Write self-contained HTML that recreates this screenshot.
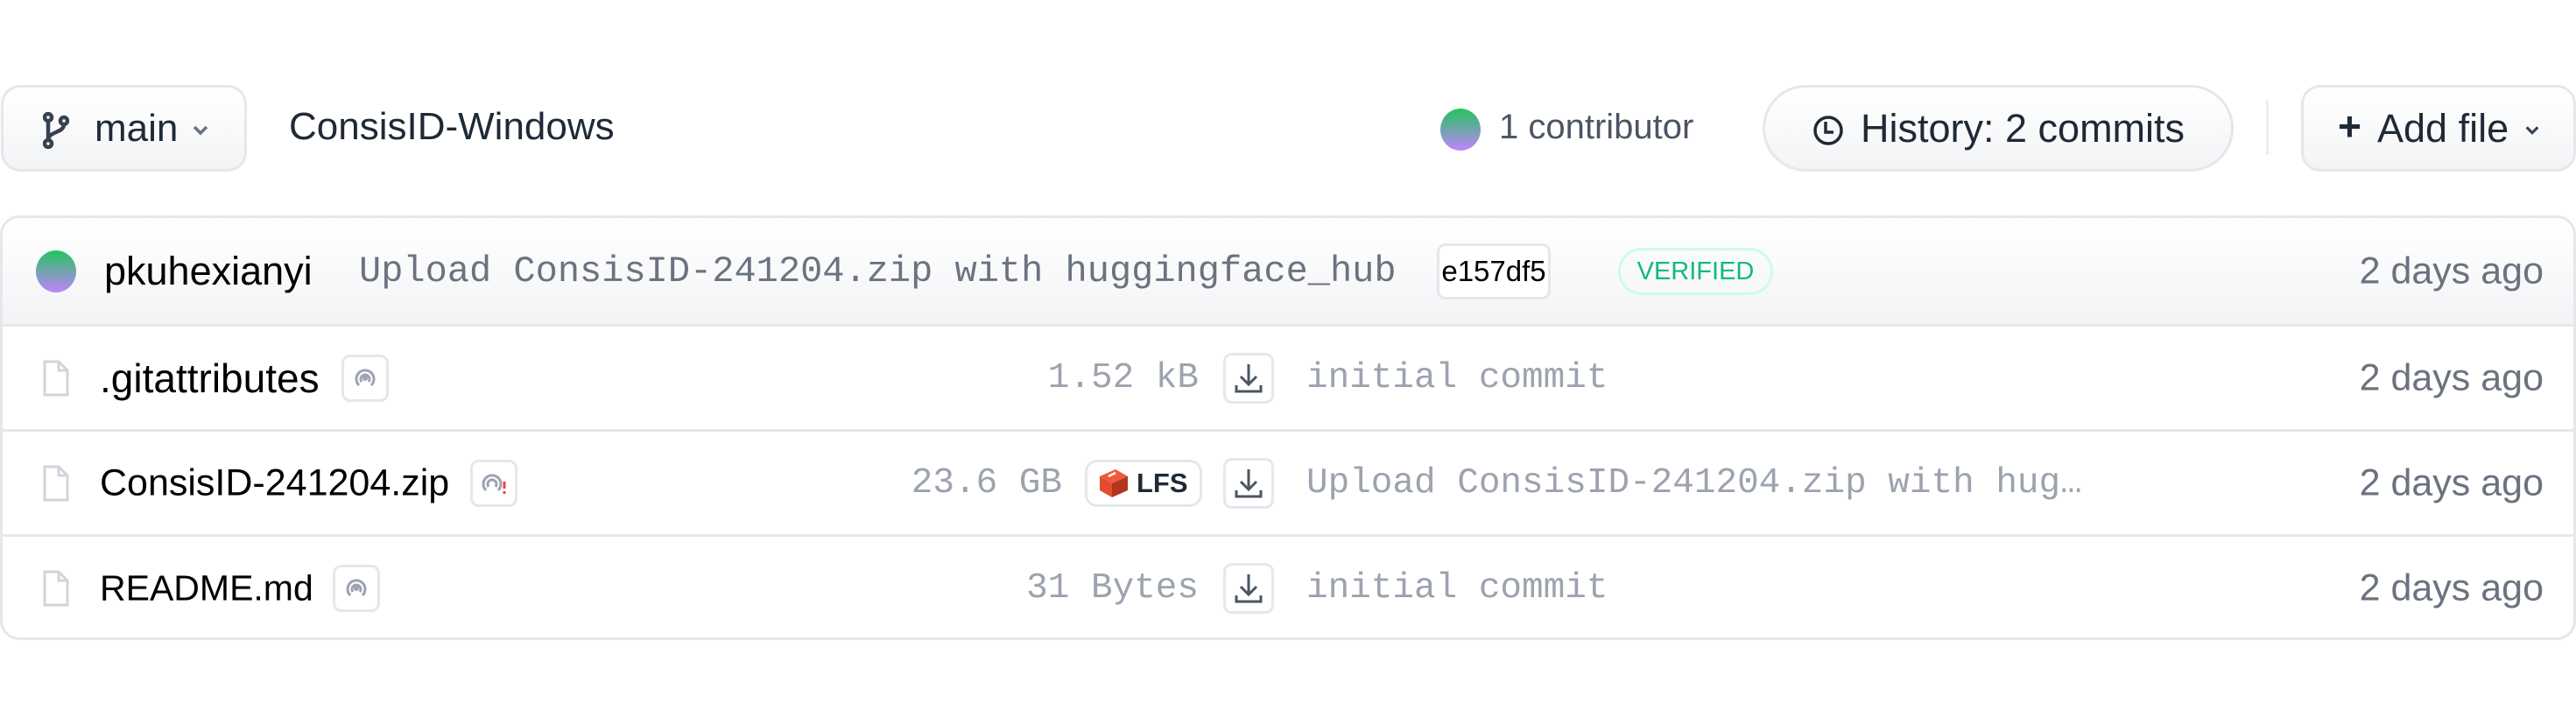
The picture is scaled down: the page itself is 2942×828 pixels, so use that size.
<!DOCTYPE html>
<html><head><meta charset="utf-8"><style>
*{box-sizing:border-box;margin:0;padding:0}
body{width:2942px;height:828px;background:#fff;position:relative;overflow:hidden;font-family:"Liberation Sans",sans-serif;color:#111827}
.a{position:absolute}
.btn{position:absolute;border:3px solid #e5e7eb;background:linear-gradient(#fff,#f3f4f6);display:flex;align-items:center}
.sans{font-size:43px;white-space:nowrap}
.mono{font-family:"Liberation Mono",monospace;font-size:41px;white-space:nowrap}
.row{position:absolute;left:0;width:2940px;height:120px;border-top:3px solid #e5e7eb}
.c{position:absolute;top:50%;transform:translateY(-50%)}
.av{border-radius:50%;background:linear-gradient(#22c55e,#c084fc)}
.badge{position:absolute;border:3px solid #e5e7eb;border-radius:10px;width:54px;height:54px;display:flex;align-items:center;justify-content:center;top:50%;transform:translateY(-50%)}
.dl{position:absolute;left:1394px;width:58px;height:58px;border:3px solid #e5e7eb;border-radius:10px;top:50%;transform:translateY(-50%);display:flex;align-items:center;justify-content:center}
</style></head><body>

<div class="btn" style="left:1px;top:97px;width:281px;height:99px;border-radius:22px">
 <svg class="a" style="left:45px;top:28px" width="30" height="42" viewBox="0 0 30 42" fill="none" stroke="#374151" stroke-width="4.5"><circle cx="6" cy="6" r="4"/><circle cx="6" cy="36" r="4"/><circle cx="24" cy="10" r="4"/><path d="M6 10v22M24 14c0 10-18 8-18 18"/></svg>
 <span class="a sans" style="left:104px;top:22px;color:#1f2937;font-size:44px">main</span>
 <svg class="a" style="left:215px;top:42px" width="20" height="14" viewBox="0 0 20 14"><path d="M3 3l7 7 7-7" fill="none" stroke="#6b7280" stroke-width="3.5"/></svg>
</div>
<span class="a sans" style="left:330px;top:120px;color:#1f2937;font-size:44px">ConsisID-Windows</span>

<div class="a av" style="left:1645px;top:124px;width:46px;height:48px"></div>
<span class="a sans" style="left:1712px;top:123px;color:#4b5563;font-size:40px">1 contributor</span>

<div class="btn" style="left:2013px;top:97px;width:538px;height:99px;border-radius:50px">
 <svg class="a" style="left:53px;top:30px" width="38" height="38" viewBox="0 0 38 38" fill="none" stroke="#1f2937" stroke-width="3.5"><circle cx="19" cy="19" r="15"/><path d="M16 9v12h9"/></svg>
 <span class="a sans" style="left:109px;top:21px;color:#1f2937;font-size:45px">History: 2 commits</span>
</div>
<div class="a" style="left:2588px;top:115px;width:3px;height:62px;background:#eceef1"></div>
<div class="btn" style="left:2628px;top:97px;width:314px;height:99px;border-radius:22px">
 <span class="a" style="left:39px;top:17px;font-size:46px;color:#1f2937;font-weight:bold">+</span>
 <span class="a sans" style="left:84px;top:21px;color:#1f2937;font-size:45px">Add file</span>
 <svg class="a" style="left:252px;top:42px" width="18" height="14" viewBox="0 0 20 14"><path d="M3 3l7 7 7-7" fill="none" stroke="#374151" stroke-width="3.5"/></svg>
</div>

<div class="a" style="left:0;top:246px;width:2942px;height:485px;border:3px solid #e5e7eb;border-radius:22px;overflow:hidden">
 <div class="a" style="left:0;top:0;width:2940px;height:122px;background:linear-gradient(#fff,#f3f4f6)">
  <div class="c av" style="left:38px;width:46px;height:48px"></div>
  <span class="c sans" style="left:116px;color:#000;font-size:45px">pkuhexianyi</span>
  <span class="c mono" style="left:407px;color:#6b7280;font-size:42px">Upload ConsisID-241204.zip with huggingface_hub</span>
  <div class="c" style="left:1638px;width:130px;height:64px;border:3px solid #e5e7eb;border-radius:10px;background:#fff;display:flex;align-items:center;justify-content:center"><span style="font-size:33px;color:#000">e157df5</span></div>
  <div class="c" style="left:1845px;width:177px;height:54px;border:3px solid #d1fae5;border-radius:28px;display:flex;align-items:center;justify-content:center"><span style="font-size:29px;color:#10b981">VERIFIED</span></div>
  <span class="c sans" style="right:38px;color:#6b7280">2 days ago</span>
 </div>

 <div class="row" style="top:121px">
  <svg class="c" style="left:46px" width="30" height="42" viewBox="0 0 30 42" fill="none" stroke="#d1d5db" stroke-width="3"><path d="M2 2h16l10 10v28H2zM18 2v10h10"/></svg>
  <span class="c sans" style="left:111px;color:#000;font-size:46px">.gitattributes</span>
  <div class="badge" style="left:387px"><svg width="28" height="28" viewBox="0 0 28 28" fill="none" stroke="#9ca3af" stroke-width="3"><path d="M7 22a10 10 0 1 1 14 0M10 18a5 5 0 1 1 8 0"/><circle cx="14" cy="14" r="1.5" fill="#9ca3af"/></svg></div>
  <span class="c mono" style="right:1574px;color:#9ca3af">1.52 kB</span>
  <div class="dl"><svg width="34" height="36" viewBox="0 0 34 36" fill="none" stroke="#4b5563" stroke-width="3"><path d="M17 2v22M8 16l9 9 9-9M3 26v7h28v-7"/></svg></div>
  <span class="c mono" style="left:1489px;color:#9ca3af">initial commit</span>
  <span class="c sans" style="right:38px;color:#6b7280">2 days ago</span>
 </div>

 <div class="row" style="top:241px">
  <svg class="c" style="left:46px" width="30" height="42" viewBox="0 0 30 42" fill="none" stroke="#d1d5db" stroke-width="3"><path d="M2 2h16l10 10v28H2zM18 2v10h10"/></svg>
  <span class="c sans" style="left:111px;color:#000;font-size:43px">ConsisID-241204.zip</span>
  <div class="badge" style="left:534px"><svg width="32" height="28" viewBox="0 0 32 28" fill="none" stroke="#9ca3af" stroke-width="3"><path d="M7 22a10 10 0 1 1 14 0M10 18a5 5 0 1 1 8 0"/><path d="M28 12v8M28 23v3" stroke="#ef4444"/></svg></div>
  <span class="c mono" style="right:1730px;color:#9ca3af">23.6 GB</span>
  <div class="c" style="left:1236px;width:134px;height:54px;border:3px solid #e5e7eb;border-radius:14px;display:flex;align-items:center;padding-left:12px">
   <svg width="36" height="36" viewBox="0 0 36 36"><path d="M2 10L20 2l14 8-18 8z" fill="#f05a3c"/><path d="M2 10l14 8v16L2 26z" fill="#e34c2e"/><path d="M16 18l18-8v16l-18 8z" fill="#b3341f"/><path d="M12 10l8-4" stroke="#fff" stroke-width="2.5"/></svg>
   <span style="font-size:31px;font-weight:bold;color:#1f2937;margin-left:8px">LFS</span>
  </div>
  <div class="dl"><svg width="34" height="36" viewBox="0 0 34 36" fill="none" stroke="#4b5563" stroke-width="3"><path d="M17 2v22M8 16l9 9 9-9M3 26v7h28v-7"/></svg></div>
  <span class="c mono" style="left:1489px;color:#9ca3af">Upload ConsisID-241204.zip with hug…</span>
  <span class="c sans" style="right:38px;color:#6b7280">2 days ago</span>
 </div>

 <div class="row" style="top:361px">
  <svg class="c" style="left:46px" width="30" height="42" viewBox="0 0 30 42" fill="none" stroke="#d1d5db" stroke-width="3"><path d="M2 2h16l10 10v28H2zM18 2v10h10"/></svg>
  <span class="c sans" style="left:111px;color:#000;font-size:41px">README.md</span>
  <div class="badge" style="left:377px"><svg width="28" height="28" viewBox="0 0 28 28" fill="none" stroke="#9ca3af" stroke-width="3"><path d="M7 22a10 10 0 1 1 14 0M10 18a5 5 0 1 1 8 0"/><circle cx="14" cy="14" r="1.5" fill="#9ca3af"/></svg></div>
  <span class="c mono" style="right:1574px;color:#9ca3af">31 Bytes</span>
  <div class="dl"><svg width="34" height="36" viewBox="0 0 34 36" fill="none" stroke="#4b5563" stroke-width="3"><path d="M17 2v22M8 16l9 9 9-9M3 26v7h28v-7"/></svg></div>
  <span class="c mono" style="left:1489px;color:#9ca3af">initial commit</span>
  <span class="c sans" style="right:38px;color:#6b7280">2 days ago</span>
 </div>
</div>
</body></html>
